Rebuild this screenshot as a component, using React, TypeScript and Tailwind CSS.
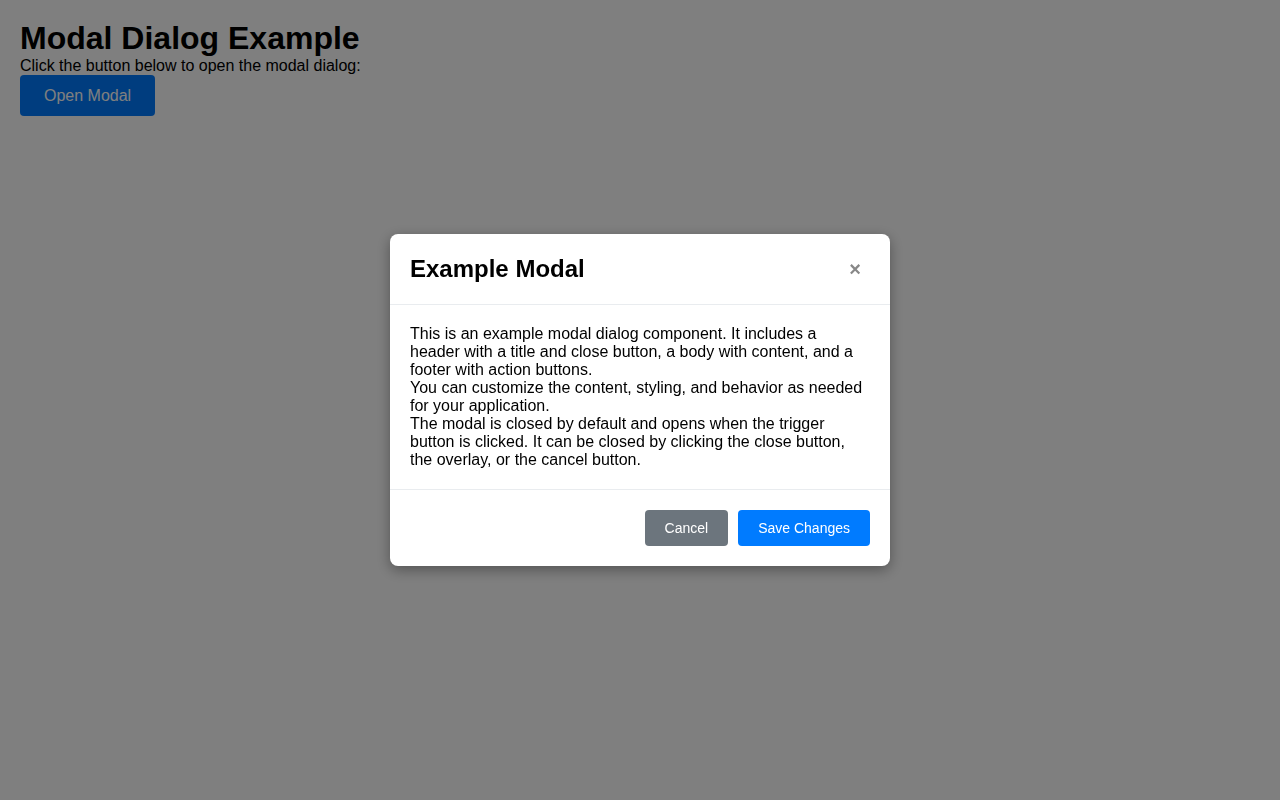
import { useState } from "react";

function Modal({ onClose }: { onClose: () => void }) {
  return (
    <div
      className="fixed inset-0 z-50 flex items-center justify-center bg-black/50"
      onClick={onClose}
    >
      <div
        className="w-[500px] rounded-lg bg-white shadow-[0_4px_14px_rgba(0,0,0,0.35)]"
        onClick={(e) => e.stopPropagation()}
      >
        {/* Header */}
        <div className="flex items-center justify-between border-b border-[#e9ecef] p-5">
          <h2 className="m-0 text-2xl leading-[normal] font-bold text-black">Example Modal</h2>
          <button
            type="button"
            onClick={onClose}
            className="flex h-[30px] w-[30px] items-center justify-center text-[20px] leading-none font-bold text-[#888]"
            aria-label="Close"
          >
            ×
          </button>
        </div>

        {/* Body */}
        <div className="p-5 text-base leading-[18px] text-black">
          <p>
            This is an example modal dialog component. It includes a header with a title and
            close button, a body with content, and a footer with action buttons.
          </p>
          <p>
            You can customize the content, styling, and behavior as needed for your application.
          </p>
          <p>
            The modal is closed by default and opens when the trigger button is clicked. It can be
            closed by clicking the close button, the overlay, or the cancel button.
          </p>
        </div>

        {/* Footer */}
        <div className="flex justify-end gap-2.5 border-t border-[#e9ecef] p-5">
          <button
            type="button"
            onClick={onClose}
            className="rounded bg-[#6c757d] px-5 py-2.5 text-sm leading-4 text-white"
          >
            Cancel
          </button>
          <button
            type="button"
            onClick={onClose}
            className="rounded bg-[#007bff] px-5 py-2.5 text-sm leading-4 text-white"
          >
            Save Changes
          </button>
        </div>
      </div>
    </div>
  );
}

export default function App() {
  const [open, setOpen] = useState(true);

  return (
    <div className="min-h-screen bg-white p-5 font-['Liberation_Sans',Arial,sans-serif] text-black">
      <h1 className="m-0 text-[32px] leading-[normal] font-bold">Modal Dialog Example</h1>
      <p className="m-0 text-base leading-[normal]">Click the button below to open the modal dialog:</p>
      <button
        type="button"
        onClick={() => setOpen(true)}
        className="h-[41px] rounded bg-[#007bff] px-6 text-base text-white"
      >
        Open Modal
      </button>

      {open && <Modal onClose={() => setOpen(false)} />}
    </div>
  );
}
